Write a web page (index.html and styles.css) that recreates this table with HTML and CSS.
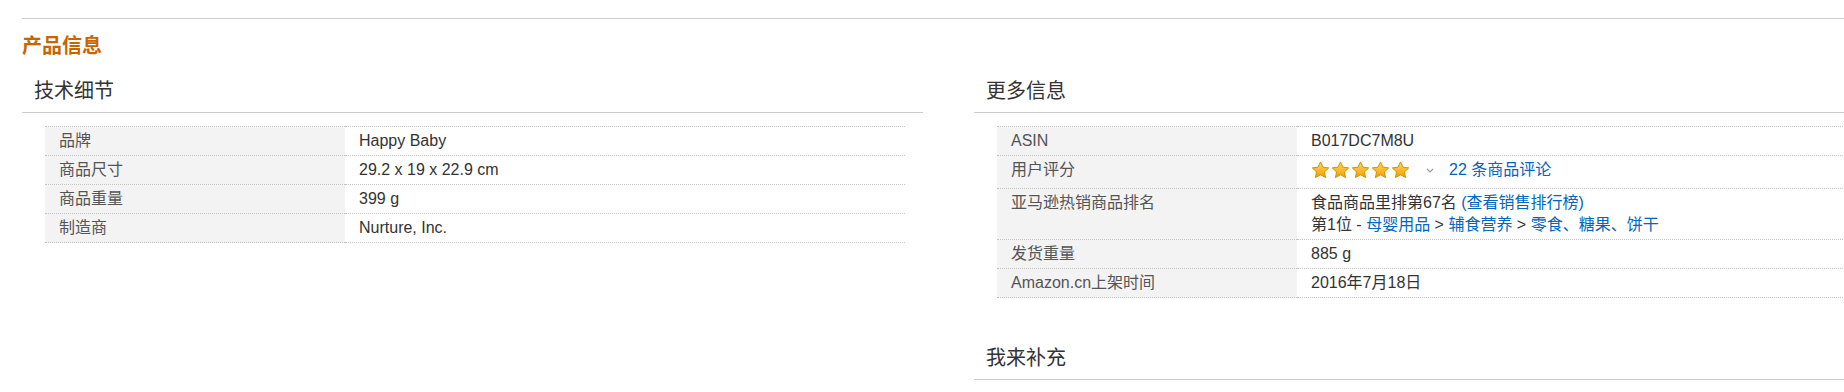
FILE: index.html
```html
<!DOCTYPE html>
<html lang="zh-CN">
<head>
<meta charset="utf-8">
<title>产品信息</title>
<link rel="stylesheet" href="styles.css">
</head>
<body>
<div class="page">
  <div class="rule"></div>
  <h2 class="section-title">产品信息</h2>
  <div class="cols">
    <div class="col">
      <h3 class="col-title">技术细节</h3>
      <table class="spec">
        <tbody>
          <tr><th>品牌</th><td>Happy Baby</td></tr>
          <tr><th>商品尺寸</th><td>29.2 x 19 x 22.9 cm</td></tr>
          <tr><th>商品重量</th><td>399 g</td></tr>
          <tr><th>制造商</th><td>Nurture, Inc.</td></tr>
        </tbody>
      </table>
    </div>
    <div class="col">
      <h3 class="col-title">更多信息</h3>
      <table class="spec">
        <tbody>
          <tr><th>ASIN</th><td>B017DC7M8U</td></tr>
          <tr>
            <th>用户评分</th>
            <td>
              <span class="rating">
                <span class="stars">
                  <svg class="star" viewBox="0 0 24 23"><defs><linearGradient id="g" x1="0" y1="0" x2="0" y2="1"><stop offset="0" stop-color="#ffd85a"/><stop offset="1" stop-color="#f0a000"/></linearGradient></defs><path d="M12 1.2l3.2 6.7 7.3.9-5.4 5.1 1.4 7.3L12 17.6l-6.5 3.6 1.4-7.3-5.4-5.1 7.3-.9z" fill="url(#g)" stroke="#d08a00" stroke-width="1.2" stroke-linejoin="round"/></svg>
                  <svg class="star" viewBox="0 0 24 23"><path d="M12 1.2l3.2 6.7 7.3.9-5.4 5.1 1.4 7.3L12 17.6l-6.5 3.6 1.4-7.3-5.4-5.1 7.3-.9z" fill="url(#g)" stroke="#d08a00" stroke-width="1.2" stroke-linejoin="round"/></svg>
                  <svg class="star" viewBox="0 0 24 23"><path d="M12 1.2l3.2 6.7 7.3.9-5.4 5.1 1.4 7.3L12 17.6l-6.5 3.6 1.4-7.3-5.4-5.1 7.3-.9z" fill="url(#g)" stroke="#d08a00" stroke-width="1.2" stroke-linejoin="round"/></svg>
                  <svg class="star" viewBox="0 0 24 23"><path d="M12 1.2l3.2 6.7 7.3.9-5.4 5.1 1.4 7.3L12 17.6l-6.5 3.6 1.4-7.3-5.4-5.1 7.3-.9z" fill="url(#g)" stroke="#d08a00" stroke-width="1.2" stroke-linejoin="round"/></svg>
                  <svg class="star" viewBox="0 0 24 23"><path d="M12 1.2l3.2 6.7 7.3.9-5.4 5.1 1.4 7.3L12 17.6l-6.5 3.6 1.4-7.3-5.4-5.1 7.3-.9z" fill="url(#g)" stroke="#d08a00" stroke-width="1.2" stroke-linejoin="round"/></svg>
                </span>
                <svg class="chev" viewBox="0 0 8 5"><path d="M1 1l3 3 3-3" fill="none" stroke="#999" stroke-width="1.2"/></svg>
                <a class="link" href="#">22 条商品评论</a>
              </span>
            </td>
          </tr>
          <tr>
            <th>亚马逊热销商品排名</th>
            <td>食品商品里排第67名 <a class="link" href="#">(查看销售排行榜)</a><br>第1位 - <a class="link" href="#">母婴用品</a> &gt; <a class="link" href="#">辅食营养</a> &gt; <a class="link" href="#">零食、糖果、饼干</a></td>
          </tr>
          <tr><th>发货重量</th><td>885 g</td></tr>
          <tr><th>Amazon.cn上架时间</th><td>2016年7月18日</td></tr>
        </tbody>
      </table>
      <h3 class="col-title later">我来补充</h3>
    </div>
  </div>
</div>
</body>
</html>
```

FILE: styles.css
```css
html, body {
  margin: 0;
  padding: 0;
  background: #fff;
}
body {
  overflow: hidden;
  font-family: "Liberation Sans", Arial, "Noto Sans CJK SC", sans-serif;
  color: #111;
}
.page {
  padding: 18px 0 0 22px;
}
.rule {
  border-top: 1px solid #ccc;
}
.section-title {
  margin: 13px 0 0;
  font-size: 20px;
  line-height: 28px;
  font-weight: bold;
  color: #c96500;
}
.cols {
  display: flex;
  gap: 51px;
  margin-top: 17px;
}
.col {
  flex: none;
  width: 901px;
}
.col-title {
  margin: 0;
  padding: 0 12px 7px;
  font-size: 20px;
  line-height: 28px;
  font-weight: normal;
  color: #333;
  border-bottom: 1px solid #ccc;
}
.col-title.later {
  margin-top: 46px;
}
.spec {
  margin: 13px 18px 0 23px;
  width: 860px;
  border-collapse: collapse;
  table-layout: fixed;
  font-size: 16px;
  line-height: 22px;
}
.spec th,
.spec td {
  padding: 3px 14px;
  text-align: left;
  vertical-align: top;
  border-top: 1px dotted #c4c4c4;
  border-bottom: 1px dotted #c4c4c4;
}
.spec th {
  width: 300px;
  box-sizing: border-box;
  background: #f3f3f3;
  font-weight: normal;
  color: #555;
}
.spec td {
  color: #333;
}
.link {
  color: #0066c0;
  text-decoration: none;
}
.rating {
  display: inline-flex;
  align-items: center;
  height: 22px;
}
.stars {
  display: inline-flex;
  gap: 1px;
}
.star {
  width: 19px;
  height: 18px;
  display: block;
}
.chev {
  width: 8px;
  height: 5px;
  margin: 0 15px 0 16px;
  display: block;
}
```
